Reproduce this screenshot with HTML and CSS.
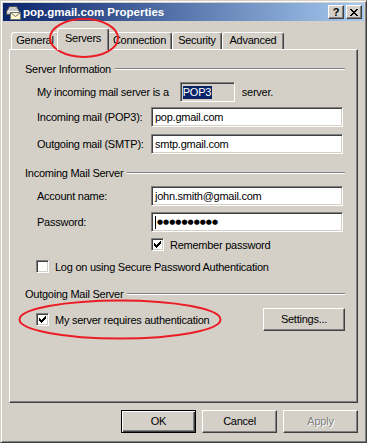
FILE: index.html
```html
<!DOCTYPE html>
<html lang="en">
<head>
    <meta charset="UTF-8">
    <title>pop.gmail.com Properties</title>
    <link rel="stylesheet" href="styles.css">
</head>
<body>
    <div class="window">
        <div class="titlebar">
            <svg class="app-icon" viewBox="0 0 16 16" width="16" height="16">
                <path d="M1.5 7.5 L4.5 2.5 H11.5 L14.5 7.5 V10.5 H1.5 Z" fill="#c8c8c8" stroke="#505050"/>
                <path d="M2.5 7.5 H13.5" stroke="#ffffff"/>
                <rect x="5.5" y="8.5" width="10" height="7" fill="#fff8d0" stroke="#707070"/>
                <path d="M5.5 8.5 L10.5 12.5 L15.5 8.5" fill="none" stroke="#707070"/>
            </svg>
            <span class="title">pop.gmail.com Properties</span>
            <div class="caption-buttons">
                <div class="caption-btn help">?</div>
                <div class="caption-btn">
                    <svg viewBox="0 0 8 7" width="8" height="7" shape-rendering="crispEdges">
                        <path d="M0 0h2v1h-2zM6 0h2v1h-2zM1 1h2v1h-2zM5 1h2v1h-2zM2 2h4v1h-4zM3 3h2v1h-2zM2 4h4v1h-4zM1 5h2v1h-2zM5 5h2v1h-2zM0 6h2v1h-2zM6 6h2v1h-2z" fill="#000"/>
                    </svg>
                </div>
            </div>
        </div>

        <div class="tabs">
            <div class="tab tab-general">General</div>
            <div class="tab tab-servers active">Servers</div>
            <div class="tab tab-connection">Connection</div>
            <div class="tab tab-security">Security</div>
            <div class="tab tab-advanced">Advanced</div>
        </div>

        <div class="panel">
            <!-- server information -->
            <div class="group-head first"><span>Server Information</span><span class="etch"></span></div>
            <div class="row row-type">
                <span>My incoming mail server is a</span>
                <span class="field field-type"><span class="sel">POP3</span></span>
                <span>server.</span>
            </div>
            <div class="row row-in">
                <span class="label">Incoming mail (POP3):</span>
                <span class="field">pop.gmail.com</span>
            </div>
            <div class="row row-out">
                <span class="label">Outgoing mail (SMTP):</span>
                <span class="field">smtp.gmail.com</span>
            </div>

            <!-- incoming mail server -->
            <div class="group-head"><span>Incoming Mail Server</span><span class="etch"></span></div>
            <div class="row row-account">
                <span class="label">Account name:</span>
                <span class="field">john.smith@gmail.com</span>
            </div>
            <div class="row row-pass">
                <span class="label">Password:</span>
                <span class="field"><span class="caret"></span><span class="dots">●●●●●●●●●●</span></span>
            </div>
            <div class="row row-remember">
                <span class="check">
                    <svg viewBox="0 0 7 7" width="7" height="7" shape-rendering="crispEdges"><path d="M6 0h1v1h-1zM5 1h2v1h-2zM0 2h1v1h-1zM4 2h3v1h-3zM0 3h2v1h-2zM3 3h3v1h-3zM0 4h5v1h-5zM1 5h3v1h-3zM2 6h1v1h-1z" fill="#000"/></svg>
                </span>
                <span>Remember password</span>
            </div>
            <div class="row row-spa">
                <span class="check"></span>
                <span>Log on using Secure Password Authentication</span>
            </div>

            <!-- outgoing mail server -->
            <div class="group-head group-out"><span>Outgoing Mail Server</span><span class="etch"></span></div>
            <div class="row row-auth">
                <span class="check">
                    <svg viewBox="0 0 7 7" width="7" height="7" shape-rendering="crispEdges"><path d="M6 0h1v1h-1zM5 1h2v1h-2zM0 2h1v1h-1zM4 2h3v1h-3zM0 3h2v1h-2zM3 3h3v1h-3zM0 4h5v1h-5zM1 5h3v1h-3zM2 6h1v1h-1z" fill="#000"/></svg>
                </span>
                <span>My server requires authentication</span>
                <span class="btn btn-settings">Settings...</span>
            </div>
        </div>

        <div class="actions">
            <span class="btn btn-default">OK</span>
            <span class="btn">Cancel</span>
            <span class="btn btn-disabled">Apply</span>
        </div>

        <!-- red annotation marks -->
        <svg class="marks" viewBox="0 0 367 443" width="367" height="443">
            <ellipse cx="84" cy="38" rx="34" ry="19" fill="none" stroke="#ec1c24" stroke-width="2"/>
            <ellipse cx="120" cy="319.5" rx="100.5" ry="19" fill="none" stroke="#ec1c24" stroke-width="2"/>
        </svg>
    </div>
</body>
</html>
```

FILE: styles.css
```css
*{
    margin:0;
    padding:0;
    box-sizing:border-box;
}
body{
    background:#d4d0c8;
    font-family:"Liberation Sans", Arial, sans-serif;
    font-size:11px;
    letter-spacing:-0.25px;
    color:#000;
}
.window{
    position:relative;
    width:367px;
    height:443px;
    border:1px solid;
    border-color:#d4d0c8 #404040 #404040 #d4d0c8;
    box-shadow:inset 1px 1px #fff, inset -1px -1px #808080;
    padding:2px;
    display:flex;
    flex-direction:column;
}

/* title bar */
.titlebar{
    height:18px;
    display:flex;
    align-items:center;
    padding:0 2px;
    background:linear-gradient(to right, #0a246a, #a6caf0);
}
.app-icon{
    margin-right:2px;
}
.title{
    flex:1;
    color:#fff;
    font-weight:bold;
    font-size:11.5px;
    letter-spacing:0;
}
.caption-buttons{
    display:flex;
    gap:2px;
}
.caption-btn{
    width:16px;
    height:14px;
    background:#d4d0c8;
    border:1px solid;
    border-color:#fff #404040 #404040 #fff;
    box-shadow:inset -1px -1px #808080;
    display:flex;
    align-items:center;
    justify-content:center;
}
.caption-btn.help{
    font-weight:bold;
    font-size:11px;
    line-height:12px;
}

/* tabs */
.tabs{
    display:flex;
    align-items:flex-end;
    height:21px;
    margin:7px 0 0 8px;
}
.tab{
    height:17px;
    border:1px solid;
    border-bottom:0;
    border-color:#fff #404040 transparent #fff;
    border-radius:3px 3px 0 0;
    box-shadow:inset -1px 0 #808080;
    text-align:center;
    line-height:15px;
}
.tab.active{
    height:22px;
    margin:0 -2px -1px;
    position:relative;
    z-index:1;
    background:#d4d0c8;
    line-height:18px;
}
.tab-general{ width:48px; }
.tab-servers{ width:52px; }
.tab-connection{ width:65px; }
.tab-security{ width:50px; }
.tab-advanced{ width:62px; }

/* panel */
.panel{
    height:354px;
    margin:0 6px;
    border:1px solid;
    border-color:#fff #404040 #404040 #fff;
    box-shadow:inset -1px -1px #808080;
    padding:0 12px 0 15px;
}
.group-head{
    display:flex;
    align-items:center;
    gap:4px;
    height:14px;
    margin-top:12px;
}
.group-out{
    margin-top:14px;
}
.etch{
    flex:1;
    height:2px;
    border-top:1px solid #808080;
    border-bottom:1px solid #fff;
}
.row{
    display:flex;
    align-items:center;
    margin-left:12px;
}
.label{
    width:114px;
}
.field{
    width:192px;
    height:20px;
    background:#fff;
    border:1px solid;
    border-color:#808080 #fff #fff #808080;
    box-shadow:inset 1px 1px #404040, inset -1px -1px #d4d0c8;
    padding:0 3px;
    line-height:18px;
    white-space:nowrap;
    overflow:hidden;
    display:flex;
    align-items:center;
}
.field-type{
    width:55px;
    background:#d4d0c8;
    padding:0 2px;
    margin:0 7px 0 11px;
}
.sel{
    background:#0a246a;
    color:#fff;
    line-height:13px;
    padding:0 1px 0 0;
}
.caret{
    width:1px;
    height:13px;
    background:#000;
    margin-right:1px;
}
.dots{
    font-family:"DejaVu Sans", sans-serif;
    font-size:7px;
    letter-spacing:0;
}

.row-type{ margin-top:6px; }
.row-in{ margin-top:5px; }
.row-out{ margin-top:7px; }
.row-account{ margin-top:6px; }
.row-pass{ margin-top:6px; }
.row-remember{ margin-top:6px; margin-left:126px; }
.row-spa{ margin-top:9px; margin-left:11px; }
.row-auth{ margin-top:7px; margin-left:11px; }

.check{
    width:13px;
    height:13px;
    background:#fff;
    border:1px solid;
    border-color:#808080 #fff #fff #808080;
    box-shadow:inset 1px 1px #404040, inset -1px -1px #d4d0c8;
    display:flex;
    align-items:center;
    justify-content:center;
    margin-right:6px;
}

/* buttons */
.btn{
    width:75px;
    height:23px;
    background:#d4d0c8;
    border:1px solid;
    border-color:#fff #404040 #404040 #fff;
    box-shadow:inset -1px -1px #808080;
    text-align:center;
    line-height:21px;
}
.btn-settings{
    width:82px;
    margin-left:auto;
}
.btn-default{
    border-color:#000;
    box-shadow:inset 1px 1px #fff, inset -1px -1px #404040, inset -2px -2px #808080;
}
.btn-disabled{
    color:#808080;
    text-shadow:1px 1px #fff;
}
.actions{
    display:flex;
    justify-content:flex-end;
    gap:6px;
    margin:7px 6px 0;
}

.marks{
    position:absolute;
    left:-1px;
    top:-1px;
    pointer-events:none;
}
```
